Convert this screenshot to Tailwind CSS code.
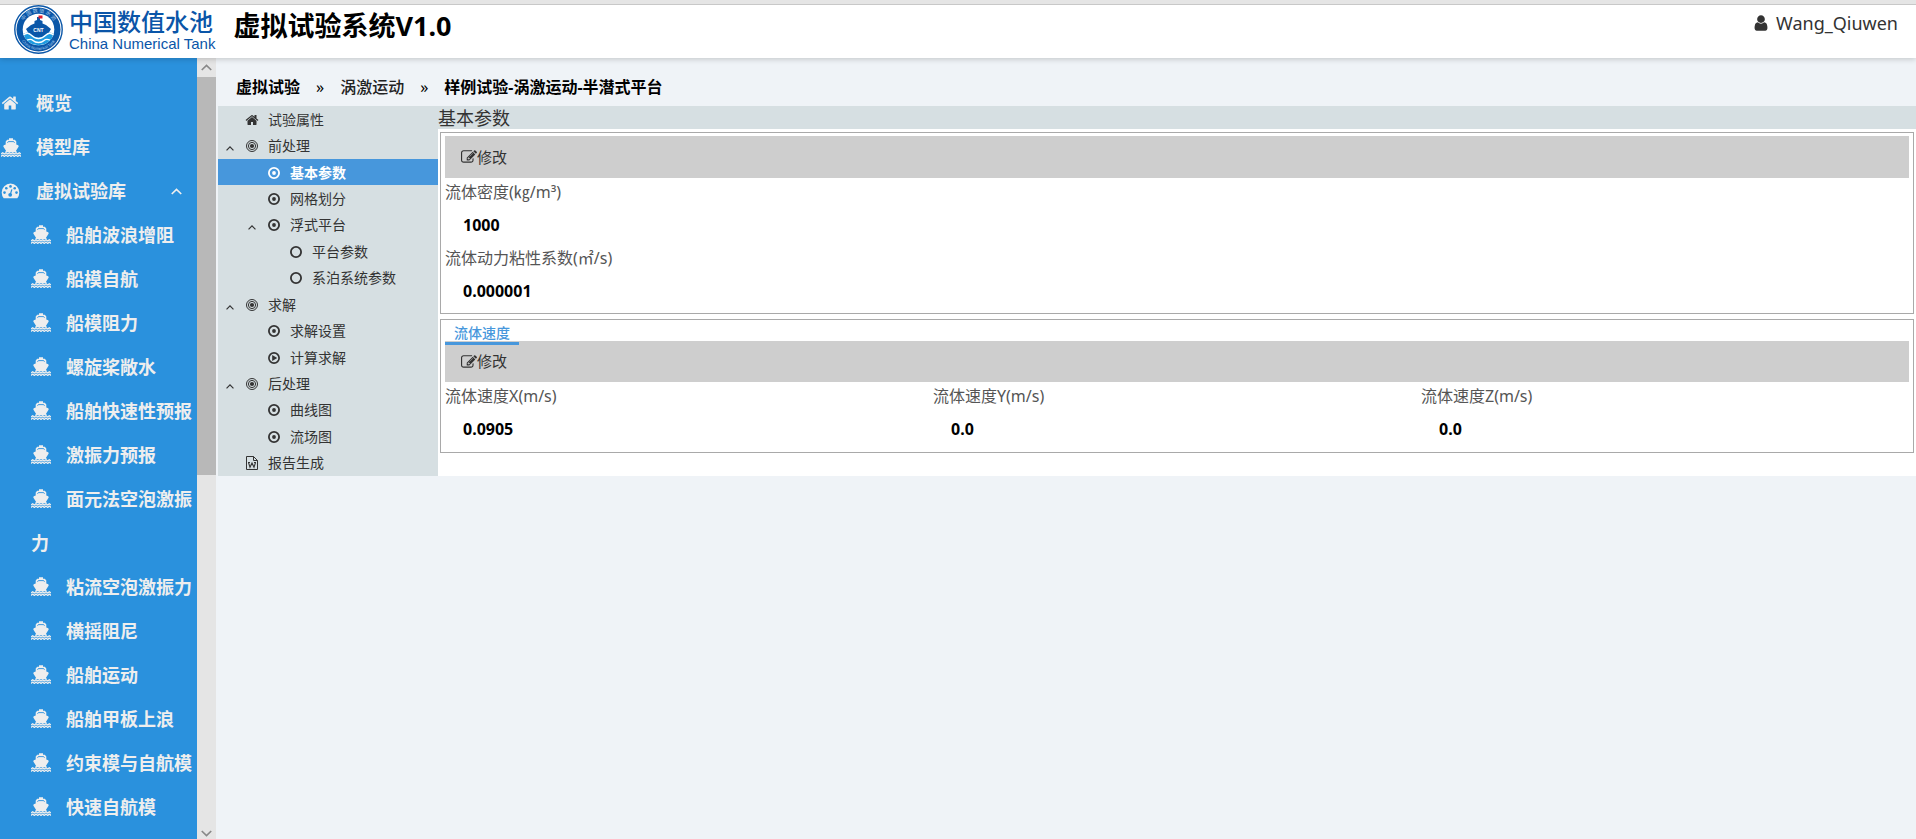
<!DOCTYPE html>
<html lang="zh-CN">
<head>
<meta charset="utf-8">
<meta name="viewport" content="width=device-width, initial-scale=1">
<title>虚拟试验系统V1.0</title>
<script src="https://cdn.jsdelivr.net/npm/@tailwindcss/browser@4"></script>
</head>
<body class="flex h-screen flex-col overflow-hidden bg-[#eff3f7] font-['Noto_Sans','Noto_Sans_CJK_SC',sans-serif] text-[15px] text-[#333333]">

<!-- Icon definitions -->
<svg class="hidden" aria-hidden="true">
  <symbol id="home" viewBox="0 0 1792 1792"><path fill="currentColor" d="M1472 992v480q0 26-19 45t-45 19h-384v-384h-256v384h-384q-26 0-45-19t-19-45v-480q0-1 .5-3t.5-3l575-474 575 474q1 2 1 6zm223-69l-62 74q-8 9-21 11h-3q-13 0-21-7l-692-577-692 577q-12 8-24 7-13-2-21-11l-62-74q-8-10-7-23.5t11-21.5l719-599q32-26 76-26t76 26l244 204v-195q0-14 9-23t23-9h192q14 0 23 9t9 23v408l219 182q10 8 11 21.5t-7 23.5z"/></symbol>
  <symbol id="user" viewBox="0 0 1792 1792"><path fill="currentColor" d="M1536 1399q0 109-62.5 187t-150.5 78h-854q-88 0-150.5-78t-62.5-187q0-85 8.5-160.5t31.5-152 58.5-131 94-89 134.5-34.5q131 128 313 128t313-128q76 0 134.5 34.5t94 89 58.5 131 31.5 152 8.5 160.5zm-256-887q0 159-112.5 271.5t-271.5 112.5-271.5-112.5-112.5-271.5 112.5-271.5 271.5-112.5 271.5 112.5 112.5 271.5z"/></symbol>
  <symbol id="edit" viewBox="0 0 1792 1792"><path fill="currentColor" d="M888 1184l116-116-152-152-116 116v56h96v96h56zm440-720q-16-16-33 1l-350 350q-17 17-1 33t33-1l350-350q17-17 1-33zm80 594v190q0 119-84.5 203.5t-203.5 84.5h-832q-119 0-203.5-84.5t-84.5-203.5v-832q0-119 84.5-203.5t203.5-84.5h832q63 0 117 25 15 7 18 23 3 17-9 29l-49 49q-14 14-32 8-23-6-45-6h-832q-66 0-113 47t-47 113v832q0 66 47 113t113 47h832q66 0 113-47t47-113v-126q0-13 9-22l64-64q15-15 35-7t20 29zm-96-738l288 288-672 672h-288v-288zm444 132l-92 92-288-288 92-92q28-28 68-28t68 28l152 152q28 28 28 68t-28 68z"/></symbol>
  <symbol id="ship" viewBox="0 0 20 19">
    <path fill="currentColor" d="M4 14.200 5 12.800 2.300 8.400 2.700 7.200 4.700 6.400V3.600L6.200 1.800H8V.3h4v1.500h1.800l1.500 1.800v2.800l2 .8.400 1.200L15 12.800l1 1.400z"/>
    <path fill="none" stroke="#2a91dd" stroke-width=".9" d="M6.500 4.800 7.300 3.600h5.400l.8 1.200"/>
    <path fill="none" stroke="currentColor" stroke-width="1.300" stroke-linejoin="round" d="M0 16l1.700-1.300L3.400 16 5 14.700 6.700 16l1.700-1.300L10 16l1.700-1.300L13.300 16l1.700-1.300 1.700 1.300 1.600-1.300L20 16M0 18.400l1.700-1.300 1.700 1.300L5 17.100l1.700 1.300 1.700-1.300 1.600 1.300 1.700-1.300 1.600 1.300 1.700-1.300 1.700 1.300 1.600-1.300 1.700 1.300"/>
  </symbol>
  <symbol id="gauge" viewBox="0 0 18 16">
    <path fill="currentColor" d="M2.200 15.200Q.2 12.600.2 9.400A8.800 8.800 0 0 1 17.800 9.400Q17.800 12.600 15.800 15.200Z"/>
    <g fill="#2a91dd"><circle cx="3" cy="9.600" r="1.300"/><circle cx="4.800" cy="5.200" r="1.300"/><circle cx="9" cy="3.400" r="1.300"/><circle cx="13.200" cy="5.200" r="1.300"/><circle cx="15" cy="9.600" r="1.300"/><circle cx="8.700" cy="11.800" r="1.900"/></g>
    <path stroke="#2a91dd" stroke-width="1.200" d="M8.700 11.800 10.400 6.400"/>
  </symbol>
  <symbol id="target" viewBox="0 0 12 12"><g fill="none" stroke="currentColor"><circle cx="6" cy="6" r="5.500" stroke-width="1"/><circle cx="6" cy="6" r="3.600" stroke-width="1"/></g><circle cx="6" cy="6" r="2.100" fill="currentColor"/></symbol>
  <symbol id="dot" viewBox="0 0 12 12"><circle cx="6" cy="6" r="5.100" fill="none" stroke="currentColor" stroke-width="1.800"/><circle cx="6" cy="6" r="1.900" fill="currentColor"/></symbol>
  <symbol id="ring" viewBox="0 0 12 12"><circle cx="6" cy="6" r="5.100" fill="none" stroke="currentColor" stroke-width="1.800"/></symbol>
  <symbol id="play" viewBox="0 0 12 12"><circle cx="6" cy="6" r="5.100" fill="none" stroke="currentColor" stroke-width="1.700"/><path fill="currentColor" d="M4.200 3 9.200 6 4.200 9z"/></symbol>
  <symbol id="word" viewBox="0 0 12 14"><path fill="none" stroke="currentColor" d="M.5.5h7l4 4v9H.5zM7.500.5v4h4"/><path fill="none" stroke="currentColor" stroke-width="1.100" d="M2.500 6.500 4 11.300 6 7l2 4.300 1.500-4.800M2 6.500h2M8 6.500h2"/></symbol>
  <symbol id="up" viewBox="0 0 10 6"><path fill="none" stroke="currentColor" stroke-width="1.500" d="M.7 5.300 5 1l4.300 4.300"/></symbol>
</svg>

<header class="relative z-10 flex h-[58px] shrink-0 items-start border-t-4 border-[#e5e5e5] bg-white shadow-[0_1px_6px_rgba(0,0,0,0.2)]">
  <div class="flex h-full w-full items-start border-t border-[#c8c8c8] pl-[14px] pr-[18px]">
    <a href="#" class="flex shrink-0 text-[#0a55a8]">
      <svg class="size-[49px]" viewBox="0 0 49 49" role="img" aria-label="CNT">
        <circle cx="24.500" cy="24.500" r="23.700" fill="#fff" stroke="#0b57a8" stroke-width="1.400"/>
        <circle cx="24.500" cy="24.500" r="22" fill="#0b57a8"/>
        <circle cx="24.500" cy="24.500" r="15.800" fill="#fff"/>
        <path id="arcTop" d="M7.300 24.500a17.200 17.200 0 0 1 34.400 0" fill="none"/>
        <path id="arcBottom" d="M4.100 24.500a20.400 20.400 0 0 0 40.800 0" fill="none"/>
        <text fill="#a9c9ea" font-size="5" text-anchor="middle" font-family="Noto Sans CJK SC"><textPath href="#arcTop" startOffset="50%">中 国 数 值 水 池</textPath></text>
        <text fill="#a9c9ea" font-size="4" text-anchor="middle" font-family="Liberation Sans"><textPath href="#arcBottom" startOffset="50%">China Numerical Tank</textPath></text>
        <path fill="#0b57a8" d="M23 12h3v3l2.500 1v2.500l3.500 1.500 5 4-4 7-8.500 4-8.500-4-4-7 5-4 3.500-1.500V16l2.500-1z"/>
        <path fill="#e02030" d="M24.500 10.500h4v3h-4z"/>
        <text x="24.500" y="26.500" fill="#fff" font-size="5" font-weight="700" text-anchor="middle" font-family="Liberation Sans">CNT</text>
        <path fill="#1f9be0" d="M9.500 29q3.500-3 7.500 0 3.500 3.500 7.500 3.500T32 29q4-3 7.500 0-3 11-15 11.300Q12.500 40 9.500 29z"/>
        <path fill="none" stroke="#fff" stroke-width="1.300" d="M9.500 30q4-3.500 7.500 0 3.500 3.500 7.500 3.500T32 30q3.500-3.500 7.500 0M13 35q4-1.500 6 .5t5.500 2 5.500-2 6-.5"/>
      </svg>
      <span class="flex flex-col pl-[6px] pt-[4px]">
        <span class="text-[24px] leading-[26px] font-medium">中国数值水池</span>
        <span class="font-['Liberation_Sans',sans-serif] text-[15px] leading-[17px]">China Numerical Tank</span>
      </span>
    </a>
    <h1 class="pl-[18px] pt-[3px] text-[27px] leading-[36px] font-bold text-black">虚拟试验系统V1.0</h1>
    <a href="#" class="ml-auto flex items-center gap-[6px] pt-[5px] text-[18px] leading-[26px]">
      <svg class="size-[18px]"><use href="#user"/></svg>Wang_Qiuwen
    </a>
  </div>
</header>

<div class="flex min-h-0 flex-1">
  <nav class="w-[197px] shrink-0 overflow-hidden bg-[#2a91dd] pt-[23px] text-[18px] leading-[44px] font-bold text-[#eeeeee]" aria-label="主菜单">
    <a href="#" class="flex items-center"><svg class="ml-[1px] mr-[17px] size-[18px]"><use href="#home"/></svg>概览</a>
    <a href="#" class="flex items-center"><svg class="ml-[1px] mr-[15px] h-[19px] w-[20px]"><use href="#ship"/></svg>模型库</a>
    <button type="button" class="flex w-full items-center pr-[15px] font-bold"><svg class="ml-[1px] mr-[16px] h-[16px] w-[19px]"><use href="#gauge"/></svg>虚拟试验库<svg class="ml-auto h-[7px] w-[11px]"><use href="#up"/></svg></button>
    <ul class="pl-[31px]">
      <li><a href="#"><svg class="mr-[15px] inline-block h-[19px] w-[20px] align-[-2px]"><use href="#ship"/></svg>船舶波浪增阻</a></li>
      <li><a href="#"><svg class="mr-[15px] inline-block h-[19px] w-[20px] align-[-2px]"><use href="#ship"/></svg>船模自航</a></li>
      <li><a href="#"><svg class="mr-[15px] inline-block h-[19px] w-[20px] align-[-2px]"><use href="#ship"/></svg>船模阻力</a></li>
      <li><a href="#"><svg class="mr-[15px] inline-block h-[19px] w-[20px] align-[-2px]"><use href="#ship"/></svg>螺旋桨敞水</a></li>
      <li><a href="#"><svg class="mr-[15px] inline-block h-[19px] w-[20px] align-[-2px]"><use href="#ship"/></svg>船舶快速性预报</a></li>
      <li><a href="#"><svg class="mr-[15px] inline-block h-[19px] w-[20px] align-[-2px]"><use href="#ship"/></svg>激振力预报</a></li>
      <li><a href="#"><svg class="mr-[15px] inline-block h-[19px] w-[20px] align-[-2px]"><use href="#ship"/></svg>面元法空泡激振力</a></li>
      <li><a href="#"><svg class="mr-[15px] inline-block h-[19px] w-[20px] align-[-2px]"><use href="#ship"/></svg>粘流空泡激振力</a></li>
      <li><a href="#"><svg class="mr-[15px] inline-block h-[19px] w-[20px] align-[-2px]"><use href="#ship"/></svg>横摇阻尼</a></li>
      <li><a href="#"><svg class="mr-[15px] inline-block h-[19px] w-[20px] align-[-2px]"><use href="#ship"/></svg>船舶运动</a></li>
      <li><a href="#"><svg class="mr-[15px] inline-block h-[19px] w-[20px] align-[-2px]"><use href="#ship"/></svg>船舶甲板上浪</a></li>
      <li><a href="#"><svg class="mr-[15px] inline-block h-[19px] w-[20px] align-[-2px]"><use href="#ship"/></svg>约束模与自航模</a></li>
      <li><a href="#"><svg class="mr-[15px] inline-block h-[19px] w-[20px] align-[-2px]"><use href="#ship"/></svg>快速自航模</a></li>
    </ul>
  </nav>

  <!-- Sidebar scrollbar -->
  <div class="mr-[2px] flex w-[19px] shrink-0 flex-col items-center bg-[#e5e5e5] text-[#888888]">
    <svg class="my-[6px] h-[7px] w-[11px] shrink-0"><use href="#up"/></svg>
    <div class="h-[398px] w-full bg-[#b8b8b8]"></div>
    <svg class="mt-auto mb-[2px] h-[7px] w-[11px] shrink-0 rotate-180"><use href="#up"/></svg>
  </div>

  <main class="flex min-w-0 flex-1 flex-col">
    <nav class="flex h-[48px] items-center gap-[16px] pl-[18px] pt-[10px] text-[16px] text-black" aria-label="路径">
      <a href="#" class="font-bold">虚拟试验</a><span>»</span><a href="#" class="font-medium text-[#222222]">涡激运动</a><span>»</span><span class="font-bold">样例试验-涡激运动-半潜式平台</span>
    </nav>

    <div class="flex">
      <ul class="flex w-[220px] shrink-0 flex-col bg-[#d6dfe2] text-[14px] leading-[20px] [&_a]:pt-[1px]">
        <li class="flex flex-1 items-center pl-[27px]"><a href="#" class="flex items-center gap-[9px]"><svg class="size-[14px]"><use href="#home"/></svg>试验属性</a></li>
        <li class="flex flex-1 items-center pl-[8px]"><svg class="mt-[6px] mr-[12px] h-[5px] w-[8px]"><use href="#up"/></svg><a href="#" class="flex items-center gap-[10px]"><svg class="size-[12px]"><use href="#target"/></svg>前处理</a></li>
        <li class="flex flex-1 items-center bg-[#4797dc] pl-[50px] font-bold text-white"><a href="#" class="flex items-center gap-[10px]"><svg class="size-[12px]"><use href="#dot"/></svg>基本参数</a></li>
        <li class="flex flex-1 items-center pl-[50px]"><a href="#" class="flex items-center gap-[10px]"><svg class="size-[12px]"><use href="#dot"/></svg>网格划分</a></li>
        <li class="flex flex-1 items-center pl-[30px]"><svg class="mt-[6px] mr-[12px] h-[5px] w-[8px]"><use href="#up"/></svg><a href="#" class="flex items-center gap-[10px]"><svg class="size-[12px]"><use href="#dot"/></svg>浮式平台</a></li>
        <li class="flex flex-1 items-center pl-[72px]"><a href="#" class="flex items-center gap-[10px]"><svg class="size-[12px]"><use href="#ring"/></svg>平台参数</a></li>
        <li class="flex flex-1 items-center pl-[72px]"><a href="#" class="flex items-center gap-[10px]"><svg class="size-[12px]"><use href="#ring"/></svg>系泊系统参数</a></li>
        <li class="flex flex-1 items-center pl-[8px]"><svg class="mt-[6px] mr-[12px] h-[5px] w-[8px]"><use href="#up"/></svg><a href="#" class="flex items-center gap-[10px]"><svg class="size-[12px]"><use href="#target"/></svg>求解</a></li>
        <li class="flex flex-1 items-center pl-[50px]"><a href="#" class="flex items-center gap-[10px]"><svg class="size-[12px]"><use href="#dot"/></svg>求解设置</a></li>
        <li class="flex flex-1 items-center pl-[50px]"><a href="#" class="flex items-center gap-[10px]"><svg class="size-[12px]"><use href="#play"/></svg>计算求解</a></li>
        <li class="flex flex-1 items-center pl-[8px]"><svg class="mt-[6px] mr-[12px] h-[5px] w-[8px]"><use href="#up"/></svg><a href="#" class="flex items-center gap-[10px]"><svg class="size-[12px]"><use href="#target"/></svg>后处理</a></li>
        <li class="flex flex-1 items-center pl-[50px]"><a href="#" class="flex items-center gap-[10px]"><svg class="size-[12px]"><use href="#dot"/></svg>曲线图</a></li>
        <li class="flex flex-1 items-center pl-[50px]"><a href="#" class="flex items-center gap-[10px]"><svg class="size-[12px]"><use href="#dot"/></svg>流场图</a></li>
        <li class="flex flex-1 items-center pl-[28px]"><a href="#" class="flex items-center gap-[10px]"><svg class="h-[14px] w-[12px]"><use href="#word"/></svg>报告生成</a></li>
      </ul>

      <div class="min-w-0 flex-1 bg-white pb-[23px]">
        <h2 class="bg-[#d6dfe2] pt-[2px] text-[18px] leading-[21px]">基本参数</h2>

        <section class="mt-[3px] mr-[2px] ml-[2px] border border-[#a9a9a9] px-[4px] py-[3px]">
          <div class="flex h-[42px] items-center bg-[#cecece] pl-[16px]">
            <button type="button" class="flex items-center"><svg class="size-[16px]"><use href="#edit"/></svg>修改</button>
          </div>
          <dl>
            <dt class="text-[16px] leading-[28px] text-[#555555]">流体密度(㎏/m³)</dt>
            <dd class="pl-[18px] text-[16px] leading-[38px] font-bold text-black">1000</dd>
            <dt class="text-[16px] leading-[28px] text-[#555555]">流体动力粘性系数(㎡/s)</dt>
            <dd class="pl-[18px] text-[16px] leading-[38px] font-bold text-black">0.000001</dd>
          </dl>
        </section>

        <section class="mt-[5px] mr-[2px] ml-[2px] border border-[#a9a9a9] px-[4px] pt-[4px] pb-[4px]">
          <div class="flex h-[17px]" role="tablist">
            <button type="button" role="tab" aria-selected="true" class="relative h-[21px] border-b-3 border-[#4797dc] px-[9px] text-[14px] leading-[18px] font-medium text-[#4797dc]">流体速度</button>
          </div>
          <div class="flex h-[41px] items-center bg-[#cecece] pl-[16px]">
            <button type="button" class="flex items-center"><svg class="size-[16px]"><use href="#edit"/></svg>修改</button>
          </div>
          <dl class="grid grid-cols-3">
            <div><dt class="text-[16px] leading-[28px] text-[#555555]">流体速度X(m/s)</dt><dd class="pl-[18px] text-[16px] leading-[38px] font-bold text-black">0.0905</dd></div>
            <div><dt class="text-[16px] leading-[28px] text-[#555555]">流体速度Y(m/s)</dt><dd class="pl-[18px] text-[16px] leading-[38px] font-bold text-black">0.0</dd></div>
            <div><dt class="text-[16px] leading-[28px] text-[#555555]">流体速度Z(m/s)</dt><dd class="pl-[18px] text-[16px] leading-[38px] font-bold text-black">0.0</dd></div>
          </dl>
        </section>
      </div>
    </div>
  </main>
</div>
</body>
</html>
